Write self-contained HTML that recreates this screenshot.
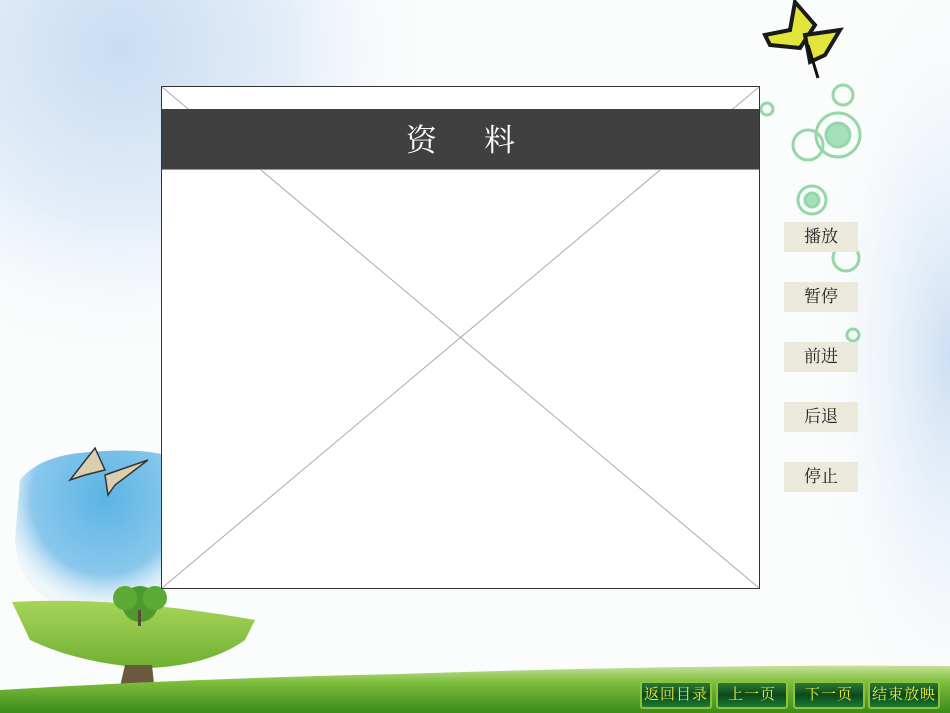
<!DOCTYPE html>
<html><head><meta charset="utf-8">
<style>
html,body{margin:0;padding:0}
body{width:950px;height:713px;position:relative;overflow:hidden;background:#fff;font-family:"Liberation Serif","Noto Serif CJK SC",serif}
.abs{position:absolute}
.btn{position:absolute;left:784px;width:74px;height:30px;background:#ebe8dc;color:#222;font-size:17px;line-height:30px;text-align:center;font-family:"Liberation Serif","Noto Serif CJK SC",serif}
.nav{position:absolute;top:681px;width:68px;height:24px;border:2px solid #8fc23a;border-radius:3px;background:linear-gradient(#2a7a3a,#0b4a1a 50%,#1d7a32);color:#f2e93a;font-size:15px;line-height:24px;text-align:center;letter-spacing:1px;font-family:"Liberation Serif","Noto Serif CJK SC",serif}
</style></head><body>
<svg class="abs" style="left:0;top:0" width="950" height="713">
<defs>
<radialGradient id="sky1" cx="0.25" cy="0.1" r="0.7"><stop offset="0" stop-color="#c9ddf2"/><stop offset="0.5" stop-color="#e3edf8"/><stop offset="1" stop-color="#fff" stop-opacity="0"/></radialGradient>
<radialGradient id="sky2" cx="1" cy="0.5" r="0.6"><stop offset="0" stop-color="#cddff3"/><stop offset="1" stop-color="#fff" stop-opacity="0"/></radialGradient>
<radialGradient id="tree" cx="0.6" cy="0.3" r="0.7"><stop offset="0" stop-color="#5ab4e4"/><stop offset="0.7" stop-color="#8ac8ec"/><stop offset="1" stop-color="#d6ecf8" stop-opacity="0.3"/></radialGradient>
<linearGradient id="grass" x1="0" y1="0" x2="0" y2="1"><stop offset="0" stop-color="#c6e29a"/><stop offset="0.35" stop-color="#7cbd3a"/><stop offset="1" stop-color="#3c8a1c"/></linearGradient>
<linearGradient id="field" x1="0" y1="0" x2="0" y2="1"><stop offset="0" stop-color="#a8d45a"/><stop offset="1" stop-color="#6fb030"/></linearGradient>
</defs>
<rect width="950" height="713" fill="#fbfcfc"/>
<rect x="0" y="0" width="480" height="480" fill="url(#sky1)"/>
<rect x="700" y="0" width="250" height="713" fill="url(#sky2)"/>
<path d="M20,480 Q40,455 90,452 Q140,448 165,455 L165,600 Q120,612 60,605 Q18,590 15,540 Z" fill="url(#tree)"/>
<path d="M12,602 Q120,596 255,620 L245,640 Q210,665 150,668 Q80,664 30,640 Z" fill="url(#field)"/>
<path d="M125,665 L152,665 L155,693 L118,695 Z" fill="#6b5a3e"/>
<circle cx="140" cy="604" r="18" fill="#4c9a2c"/><circle cx="125" cy="598" r="12" fill="#5aaa35"/><circle cx="155" cy="598" r="12" fill="#5aaa35"/>
<rect x="138" y="610" width="3" height="16" fill="#5a4a30"/>
<path d="M0,690 Q200,678 400,674 Q700,664 950,666 L950,713 L0,713 Z" fill="url(#grass)"/>
<path d="M795,2 L815,25 L800,48 L770,45 L765,35 L790,30 Z" fill="#e2e53a" stroke="#1a1a1a" stroke-width="4"/>
<path d="M805,35 L840,30 L825,55 L810,62 Z" fill="#e2e53a" stroke="#1a1a1a" stroke-width="4"/>
<line x1="808" y1="45" x2="818" y2="78" stroke="#111" stroke-width="3"/>
<path d="M95,448 L105,470 L85,475 L70,480 Z" fill="#d9ceb0" stroke="#333" stroke-width="1.5"/>
<path d="M105,475 L148,460 L115,485 L108,495 Z" fill="#d9ceb0" stroke="#333" stroke-width="1.5"/>
<g fill="none" stroke="#7ccf93" stroke-width="3" opacity="0.8">
<circle cx="838" cy="135" r="22"/><circle cx="838" cy="135" r="12" fill="#8fdaa8"/>
<circle cx="808" cy="145" r="15"/><circle cx="843" cy="95" r="10"/>
<circle cx="812" cy="200" r="14"/><circle cx="812" cy="200" r="7" fill="#8fdaa8"/>
<circle cx="846" cy="258" r="13"/><circle cx="767" cy="109" r="6"/><circle cx="853" cy="335" r="6"/>
</g>
<rect x="161.5" y="86.5" width="598" height="502" fill="#fff" stroke="#333" stroke-width="1"/>
<line x1="162" y1="87" x2="759" y2="588" stroke="#aaa" stroke-width="1"/>
<line x1="759" y1="87" x2="162" y2="588" stroke="#aaa" stroke-width="1"/>
<rect x="162" y="109" width="597" height="60" fill="#404040"/>
<line x1="162" y1="169.5" x2="759" y2="169.5" stroke="#999"/>
</svg>
<div class="abs" style="left:406px;top:122px;color:#fff;font-size:31px;line-height:38px;letter-spacing:47px">资料</div>
<div class="btn" style="top:222px">播放</div>
<div class="btn" style="top:282px">暂停</div>
<div class="btn" style="top:342px">前进</div>
<div class="btn" style="top:402px">后退</div>
<div class="btn" style="top:462px">停止</div>
<div class="nav" style="left:640px">返回目录</div>
<div class="nav" style="left:716px">上一页</div>
<div class="nav" style="left:793px">下一页</div>
<div class="nav" style="left:868px">结束放映</div>
</body></html>
